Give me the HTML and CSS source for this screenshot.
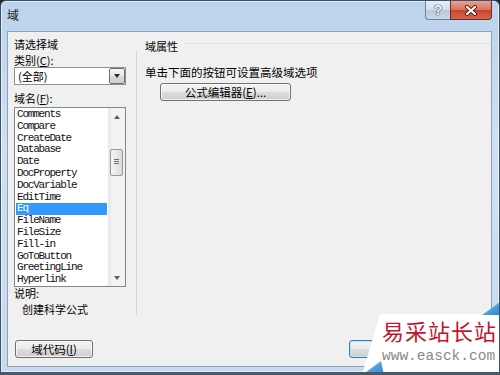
FILE: index.html
```html
<!DOCTYPE html>
<html lang="zh-CN">
<head>
    <meta charset="UTF-8">
    <title>域</title>
    <link rel="stylesheet" href="styles.css">
</head>
<body>

    <div class="window">
        <!-- Title bar -->
        <div class="titlebar">
            <span class="title">域</span>
            <div class="caption">
                <span class="cap-btn help">?</span>
                <span class="cap-btn close">
                    <svg width="14" height="11" viewBox="0 0 14 11">
                        <path d="M3 2 L11 9 M11 2 L3 9" stroke="#5a1a10" stroke-width="4" stroke-linecap="round"/>
                        <path d="M3 2 L11 9 M11 2 L3 9" stroke="#ffffff" stroke-width="2.2" stroke-linecap="round"/>
                    </svg>
                </span>
            </div>
        </div>

        <!-- Dialog body -->
        <div class="client">
            <div class="panes">
                <div class="left">
                    <div class="head">请选择域</div>
                    <div class="label">类别(<u>C</u>):</div>
                    <div class="combo">
                        <span class="combo-text">(全部)</span>
                        <span class="combo-btn"><span class="tri down"></span></span>
                    </div>
                    <div class="label names">域名(<u>F</u>):</div>
                    <div class="listbox">
                        <ul class="items">
                            <li>Comments</li>
                            <li>Compare</li>
                            <li>CreateDate</li>
                            <li>Database</li>
                            <li>Date</li>
                            <li>DocProperty</li>
                            <li>DocVariable</li>
                            <li>EditTime</li>
                            <li class="selected">Eq</li>
                            <li>FileName</li>
                            <li>FileSize</li>
                            <li>Fill-in</li>
                            <li>GoToButton</li>
                            <li>GreetingLine</li>
                            <li>Hyperlink</li>
                        </ul>
                        <div class="scrollbar">
                            <span class="arrow"><span class="tri up"></span></span>
                            <span class="track"><span class="thumb"></span></span>
                            <span class="arrow"><span class="tri down"></span></span>
                        </div>
                    </div>
                    <div class="desc-label">说明:</div>
                    <div class="desc">创建科学公式</div>
                </div>
                <div class="divider"></div>
                <div class="right">
                    <div class="head group">域属性</div>
                    <div class="hint">单击下面的按钮可设置高级域选项</div>
                    <button class="btn editor">公式编辑器(<u>E</u>)...</button>
                </div>
            </div>
            <div class="footer">
                <button class="btn codes">域代码(<u>I</u>)</button>
                <!-- OK / Cancel sit under the watermark, their labels are not visible -->
                <div class="actions">
                    <button class="btn default" aria-label="确定"></button>
                    <button class="btn" aria-label="取消"></button>
                </div>
            </div>
        </div>

        <!-- Site watermark over the corner -->
        <div class="watermark">
            <svg class="paper" width="140" height="73" viewBox="0 0 140 73">
                <defs>
                    <linearGradient id="blue" x1="0" y1="0" x2="1" y2="1">
                        <stop offset="0" stop-color="#7cc0ee"/>
                        <stop offset="1" stop-color="#2a86cf"/>
                    </linearGradient>
                </defs>
                <polygon points="20,12 140,12 140,73 2,73" fill="#ffffff"/>
                <polygon points="122,13 140,0 140,13" fill="url(#blue)"/>
                <polygon points="2,73 21,59 24,73" fill="url(#blue)"/>
            </svg>
            <div class="wm-name">易采站长站</div>
            <div class="wm-url">www.easck.com</div>
        </div>
    </div>

</body>
</html>
```

FILE: styles.css
```css
body {
    margin: 0;
    background-color: #1f2731;
    font-family: "Noto Sans CJK SC", "Liberation Sans", sans-serif;
    font-size: 12px;
    color: #000;
}
.window {
    position: relative;
    width: 500px;
    height: 375px;
    box-sizing: border-box;
    border: 1px solid #3d5169;
    border-bottom: 3px solid #4b5866;
    border-radius: 6px 6px 0 0;
    background: linear-gradient(to bottom, #bcd3ec 0%, #cfe0f3 40%, #c6daf0 100%);
    box-shadow: inset 0 0 0 1px rgba(255, 255, 255, 0.55);
    display: flex;
    flex-direction: column;
    overflow: hidden;
}
.titlebar {
    height: 30px;
    flex-shrink: 0;
    display: flex;
    justify-content: space-between;
    align-items: flex-start;
    padding: 0 7px 0 6px;
}
.title {
    margin-top: 7px;
    line-height: 14px;
    color: #1b1b1b;
}
.caption {
    display: flex;
}
.cap-btn {
    height: 19px;
    box-sizing: border-box;
    display: flex;
    align-items: center;
    justify-content: center;
}
.help {
    width: 25px;
    border: 1px solid #6f8299;
    border-top: none;
    border-right: none;
    border-radius: 0 0 0 4px;
    background: linear-gradient(to bottom, #e6eef7 0%, #d2deeb 50%, #b9c9dc 51%, #c9d7e6 100%);
    color: #f4f6f9;
    font-family: "Liberation Sans", sans-serif;
    font-weight: bold;
    font-size: 14px;
    text-shadow: 0 0 1px #3b4a5c, 0 0 1px #3b4a5c, 0 0 1px #3b4a5c;
}
.close {
    width: 42px;
    border: 1px solid #6e2a20;
    border-top: none;
    border-radius: 0 0 4px 0;
    background: linear-gradient(to bottom, #e8a293 0%, #d7705e 50%, #c7442d 51%, #d4664f 100%);
}
.client {
    height: 336px;
    flex-shrink: 0;
    margin: 0 7px 0 6px;
    box-sizing: border-box;
    border: 1px solid #8ea2ba;
    background-color: #f0f0f0;
    display: flex;
    flex-direction: column;
}
.panes {
    display: flex;
    padding-left: 6px;
}
.left {
    width: 112px;
    padding-top: 5px;
}
.head, .label {
    font-size: 11px;
    line-height: 14px;
}
.label {
    margin-top: 2px;
}
.label.names {
    margin-top: 6px;
}
.combo {
    height: 18px;
    box-sizing: border-box;
    border: 1px solid #8e8f8f;
    background: white;
    display: flex;
    justify-content: space-between;
}
.combo-text {
    padding-left: 3px;
    font-size: 11px;
    line-height: 16px;
}
.combo-btn {
    width: 16px;
    box-sizing: border-box;
    border: 1px solid #707070;
    border-radius: 2px;
    background: linear-gradient(to bottom, #f4f4f4 0%, #e9e9e9 50%, #dadada 51%, #d0d0d0 100%);
    display: flex;
    align-items: center;
    justify-content: center;
}
.tri {
    width: 0;
    height: 0;
    border-left: 3px solid transparent;
    border-right: 3px solid transparent;
}
.tri.down {
    border-top: 4px solid #2a2a2a;
}
.tri.up {
    border-bottom: 4px solid #2a2a2a;
}
.scrollbar .tri.down, .scrollbar .tri.up {
    border-top-color: #5b5b5b;
    border-bottom-color: #5b5b5b;
}
.listbox {
    margin-top: 2px;
    height: 180px;
    box-sizing: border-box;
    border: 1px solid #828790;
    background: white;
    display: flex;
}
.items {
    list-style: none;
    margin: 0;
    padding: 1px 1px 0 1px;
    flex: 1;
}
.items li {
    height: 11.8px;
    line-height: 11.8px;
    padding-left: 1px;
    font-family: "Liberation Mono", monospace;
    font-size: 11px;
    letter-spacing: -1.2px;
    color: #111;
}
.items li.selected {
    background-color: #3399ff;
    color: white;
}
.scrollbar {
    width: 17px;
    background: linear-gradient(to right, #e7e7e7 0%, #f3f3f3 30%, #f3f3f3 100%);
    display: flex;
    flex-direction: column;
}
.arrow {
    height: 17px;
    display: flex;
    align-items: center;
    justify-content: center;
}
.track {
    flex: 1;
}
.thumb {
    display: block;
    margin: 24px 0 0 2px;
    width: 13px;
    height: 27px;
    box-sizing: border-box;
    border: 1px solid #979797;
    border-radius: 2px;
    background: linear-gradient(to right, #f5f5f5 0%, #e6e6e6 60%, #dadada 100%);
    position: relative;
}
.thumb::after {
    content: "";
    position: absolute;
    left: 3px;
    top: 9px;
    width: 5px;
    height: 1px;
    background: #6f6f6f;
    box-shadow: 0 2px 0 #6f6f6f, 0 4px 0 #6f6f6f;
}
.desc-label, .desc {
    font-size: 11px;
    line-height: 12px;
}
.desc {
    margin-top: 4px;
    padding-left: 8px;
}
.divider {
    width: 1px;
    margin: 18px 0 0 10px;
    background-color: #d5d5d5;
}
.right {
    flex: 1;
    padding: 7px 0 0 8px;
}
.head.group {
    display: flex;
    align-items: center;
}
.head.group::after {
    content: "";
    flex: 1;
    height: 1px;
    margin-left: 6px;
    margin-top: -6px;
    background-color: #e2e2e2;
}
.hint {
    margin-top: 12px;
    line-height: 14px;
    font-size: 11.5px;
}
.btn {
    height: 18px;
    box-sizing: border-box;
    padding: 0;
    border: 1px solid #707070;
    border-radius: 3px;
    background: linear-gradient(to bottom, #f3f3f3 0%, #ebebeb 50%, #dddddd 51%, #cfcfcf 100%);
    box-shadow: inset 0 0 0 1px rgba(255, 255, 255, 0.7);
    font-family: "Noto Sans CJK SC", "Liberation Sans", sans-serif;
    font-size: 11.5px;
    line-height: 14px;
    color: #000;
}
.btn.editor {
    display: block;
    margin: 4px 0 0 15px;
    width: 131px;
}
.footer {
    margin-top: auto;
    padding: 0 6px 8px 7px;
    display: flex;
    justify-content: space-between;
}
.btn.codes {
    width: 78px;
}
.actions {
    display: flex;
    gap: 6px;
}
.actions .btn {
    width: 65px;
}
.btn.default {
    border-color: #3c7fb1;
    box-shadow: inset 0 0 0 1px #b8e3f9;
}
.watermark {
    position: absolute;
    right: -1px;
    bottom: -3px;
    width: 140px;
    height: 73px;
}
.paper {
    position: absolute;
    left: 0;
    top: 0;
}
.wm-name {
    position: absolute;
    left: 22px;
    top: 13px;
    font-size: 22px;
    line-height: 30px;
    letter-spacing: 1px;
    color: #c3152f;
    white-space: nowrap;
}
.wm-url {
    position: absolute;
    left: 22px;
    top: 46px;
    font-family: "Liberation Mono", monospace;
    font-size: 14.5px;
    line-height: 16px;
    color: #8a8a8a;
    white-space: nowrap;
}
```
